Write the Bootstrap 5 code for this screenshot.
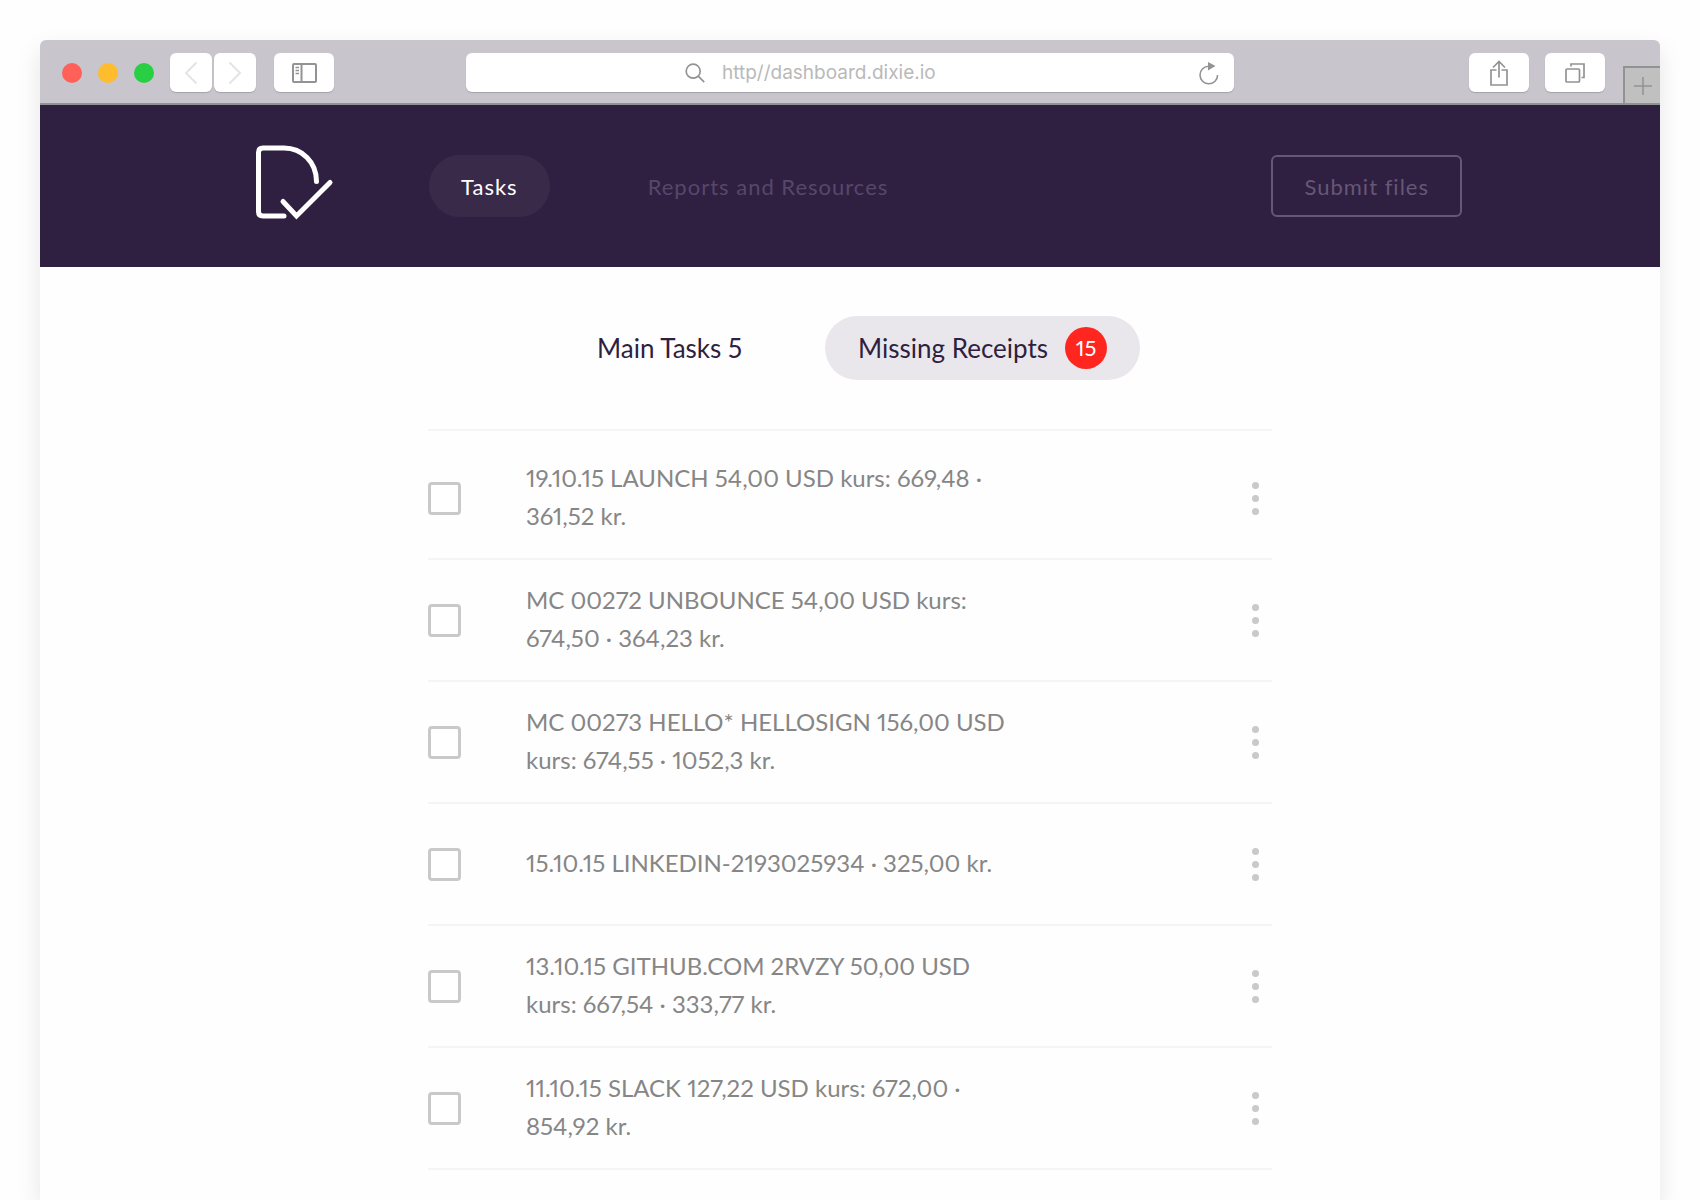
<!DOCTYPE html>
<html lang="en">
<head>
<meta charset="utf-8">
<meta name="viewport" content="width=device-width, initial-scale=1">
<title>Dixie dashboard</title>
<link href="https://cdn.jsdelivr.net/npm/bootstrap@5.3.0/dist/css/bootstrap.min.css" rel="stylesheet">
<style>
  body { background: #fefefe; font-family: Lato, "Open Sans", sans-serif; font-variant-numeric: proportional-nums; }
  .page-wrap { padding: 40px 40px 0; min-height: 100vh; }
  .browser { background: #fefefe; border-radius: 6px 6px 0 0; box-shadow: 0 10px 24px rgba(0, 0, 0, .1); }

  /* browser chrome */
  .toolbar { height: 65px; padding-top: 2px; background: #c8c5cc; border-bottom: 2px solid #929292; border-radius: 6px 6px 0 0; overflow: hidden; }
  .toolbar-side { flex: 1 1 0; }
  .dots { gap: 16px; margin: 0 16px 0 22px; }
  .dot { width: 20px; height: 20px; border-radius: 50%; }
  .dot-red { background: #ff6159; }
  .dot-yellow { background: #ffbd2e; }
  .dot-green { background: #28cf42; }
  .tool-btn { width: 60px; height: 39px; padding: 0; border: 0; border-radius: 6px; background: #fff; color: #939393; box-shadow: 0 1px 1px rgba(0, 0, 0, .18); }
  .tool-btn.half { width: 42px; color: #e4e4e4; }
  .history { gap: 2px; margin-right: 18px; }
  .address { flex: 0 1 768px; height: 39px; padding: 0 15px 0 219px; border-radius: 6px; background: #fff; color: #939393; box-shadow: 0 1px 1px rgba(0, 0, 0, .18); }
  .address-field { margin-left: 17px; font-family: Inter, Roboto, sans-serif; font-size: 19px; color: #b9b9b9; border: 0; padding: 2px 0 0; background: none; min-width: 0; }
  .icon-btn { border: 0; background: none; padding: 0; color: inherit; }
  .new-tab { width: 37px; height: 37px; margin-left: 18px; padding: 0; border: solid #929292; border-width: 2px 0 0 2px; background: #c0c0c0; color: #929292; }

  /* site header */
  .site-header { background: #2f1f41; min-height: 162px; padding: 0 198px 0 216px; }
  .site-nav { margin-left: 95px; gap: 66px; }
  .nav-pill { font-size: 22px; line-height: 30px; letter-spacing: 1px; padding: 17px 32px 15px; border-radius: 32px; color: #57476a; text-decoration: none; }
  .nav-pill.active { background: #3a2a4a; color: #fff; }
  .submit-btn { font-size: 22px; line-height: 30px; letter-spacing: 1px; padding: 15px 31px 13px; border: 2px solid #665776; border-radius: 6px; background: none; color: #665776; }

  /* task list */
  .tasks { width: 844px; max-width: 100%; margin: 0 auto; padding-top: 49px; }
  .task-tabs { gap: 50px; margin-left: 4px; }
  .tab-link { font-size: 26px; line-height: 42px; color: #2f1f41; text-decoration: none; padding: 11px 33px; border-radius: 32px; }
  .tab-link.active { background: #e9e7ec; }
  .count { width: 42px; height: 42px; margin-left: 17px; border-radius: 50%; background: #ff2620; color: #fff; font-size: 22px; text-align: center; }
  .task-list { margin-top: 49px; border-top: 2px solid #f4f4f4; padding-top: 7px; }
  .task { min-height: 122px; border-bottom: 2px solid #f4f4f4; }
  .task-check { appearance: none; flex: none; width: 33px; height: 33px; margin: 0; border: 3px solid #c9c9c9; border-radius: 4px; background: #fff; }
  .task-check:checked { background: #c9c9c9; }
  .task-text { width: 490px; padding-bottom: 2px; margin-left: 65px; font-size: 24px; line-height: 38px; color: #868686; }
  .task-more { border: 0; background: none; padding: 0 13px; color: #c9c9c9; }
</style>
</head>
<body>
<div class="page-wrap d-flex flex-column">
  <div class="browser flex-grow-1">
    <div class="toolbar d-flex align-items-center">
      <div class="toolbar-side d-flex align-items-center">
        <div class="dots d-flex">
          <span class="dot dot-red"></span><span class="dot dot-yellow"></span><span class="dot dot-green"></span>
        </div>
        <div class="history d-flex">
          <button type="button" class="tool-btn half d-flex align-items-center justify-content-center" aria-label="Back">
            <svg width="14" height="24" viewBox="0 0 14 24" fill="none" stroke="currentColor" stroke-width="2"><path d="M12.500 1.500 2 12l10.500 10.500"/></svg>
          </button>
          <button type="button" class="tool-btn half d-flex align-items-center justify-content-center" aria-label="Forward">
            <svg width="14" height="24" viewBox="0 0 14 24" fill="none" stroke="currentColor" stroke-width="2"><path d="M1.500 1.500 12 12 1.500 22.500"/></svg>
          </button>
        </div>
        <button type="button" class="tool-btn d-flex align-items-center justify-content-center" aria-label="Sidebar">
          <svg width="25" height="20" viewBox="0 0 25 20" fill="none" stroke="currentColor" stroke-width="2"><rect x="1" y="1" width="23" height="18" rx="1"/><path d="M9.500 1v18"/><path d="M3.500 4.500h3.500M3.500 7.500h3.500M3.500 10.500h3.500" stroke-width="1.300"/></svg>
        </button>
      </div>
      <div class="address d-flex align-items-center">
        <svg width="20" height="20" viewBox="0 0 20 20" fill="none" stroke="currentColor" stroke-width="1.700"><circle cx="8.200" cy="8.200" r="7"/><path d="m13.200 13.200 6 6"/></svg>
        <input class="address-field flex-grow-1" type="text" value="http//dashboard.dixie.io" aria-label="Address">
        <button type="button" class="icon-btn d-flex" aria-label="Reload">
          <svg width="20" height="24" viewBox="0 0 20 24" fill="none" stroke="currentColor" stroke-width="1.600"><path d="M18.600 14a8.800 8.800 0 1 1-8.800-8.800"/><path d="M9 1v8.500L16.500 5z" fill="currentColor" stroke="none"/></svg>
        </button>
      </div>
      <div class="toolbar-side d-flex align-items-center align-self-stretch justify-content-end">
        <button type="button" class="tool-btn d-flex align-items-center justify-content-center" aria-label="Share">
          <svg width="18" height="26" viewBox="0 0 18 26" fill="none" stroke="currentColor" stroke-width="1.700"><path d="M6.500 10H1v15h16V10h-5.500"/><path d="M9 17.500V1.500M3 7.500l6-6 6 6"/></svg>
        </button>
        <button type="button" class="tool-btn d-flex align-items-center justify-content-center ms-3" aria-label="Show tabs">
          <svg width="20" height="20" viewBox="0 0 20 20" fill="none" stroke="currentColor" stroke-width="1.700"><rect x="1" y="6" width="13.500" height="13" rx="1"/><path d="M6 3.500V1h13v13.500h-2.500"/></svg>
        </button>
        <button type="button" class="new-tab d-flex align-items-center justify-content-center align-self-end" aria-label="New tab">
          <svg width="18" height="18" viewBox="0 0 18 18" stroke="currentColor" stroke-width="1.500"><path d="M9 0v18M0 9h18"/></svg>
        </button>
      </div>
    </div>

    <header class="site-header d-flex align-items-center">
      <a href="#" class="d-flex" aria-label="Dixie home">
        <svg width="78" height="82" viewBox="0 0 78 82" fill="none" stroke="#fff" stroke-width="5" stroke-linecap="round" stroke-linejoin="round"><path d="M28 71H7q-4.500 0-4.500-4.500V7.500Q2.500 3 7 3h21C46 3 60.500 17 60.500 36.500"/><path d="M27 56.500 40.500 71 74 37.500" stroke-linejoin="miter"/></svg>
      </a>
      <nav class="site-nav d-flex align-items-center">
        <a href="#" class="nav-pill active" aria-current="page">Tasks</a>
        <a href="#" class="nav-pill">Reports and Resources</a>
      </nav>
      <button type="button" class="submit-btn ms-auto">Submit files</button>
    </header>

    <main class="tasks">
      <nav class="task-tabs d-flex justify-content-center">
        <a href="#" class="tab-link">Main Tasks 5</a>
        <a href="#" class="tab-link active d-flex align-items-center" aria-current="page">Missing Receipts <span class="count">15</span></a>
      </nav>
      <ul class="task-list list-unstyled mb-0">
        <li class="task d-flex align-items-center">
          <input class="task-check" type="checkbox" id="task-1">
          <label class="task-text" for="task-1">19.10.15 LAUNCH 54,00 USD kurs: 669,48 ·<br>361,52 kr.</label>
          <button type="button" class="task-more d-flex ms-auto" aria-label="More"><svg width="7" height="33" viewBox="0 0 7 33" fill="currentColor"><circle cx="3.500" cy="3.500" r="3.500"/><circle cx="3.500" cy="16.500" r="3.500"/><circle cx="3.500" cy="29.500" r="3.500"/></svg></button>
        </li>
        <li class="task d-flex align-items-center">
          <input class="task-check" type="checkbox" id="task-2">
          <label class="task-text" for="task-2">MC 00272 UNBOUNCE 54,00 USD kurs:<br>674,50 · 364,23 kr.</label>
          <button type="button" class="task-more d-flex ms-auto" aria-label="More"><svg width="7" height="33" viewBox="0 0 7 33" fill="currentColor"><circle cx="3.500" cy="3.500" r="3.500"/><circle cx="3.500" cy="16.500" r="3.500"/><circle cx="3.500" cy="29.500" r="3.500"/></svg></button>
        </li>
        <li class="task d-flex align-items-center">
          <input class="task-check" type="checkbox" id="task-3">
          <label class="task-text" for="task-3">MC 00273 HELLO* HELLOSIGN 156,00 USD<br>kurs: 674,55 · 1052,3 kr.</label>
          <button type="button" class="task-more d-flex ms-auto" aria-label="More"><svg width="7" height="33" viewBox="0 0 7 33" fill="currentColor"><circle cx="3.500" cy="3.500" r="3.500"/><circle cx="3.500" cy="16.500" r="3.500"/><circle cx="3.500" cy="29.500" r="3.500"/></svg></button>
        </li>
        <li class="task d-flex align-items-center">
          <input class="task-check" type="checkbox" id="task-4">
          <label class="task-text" for="task-4">15.10.15 LINKEDIN-2193025934 · 325,00 kr.</label>
          <button type="button" class="task-more d-flex ms-auto" aria-label="More"><svg width="7" height="33" viewBox="0 0 7 33" fill="currentColor"><circle cx="3.500" cy="3.500" r="3.500"/><circle cx="3.500" cy="16.500" r="3.500"/><circle cx="3.500" cy="29.500" r="3.500"/></svg></button>
        </li>
        <li class="task d-flex align-items-center">
          <input class="task-check" type="checkbox" id="task-5">
          <label class="task-text" for="task-5">13.10.15 GITHUB.COM 2RVZY 50,00 USD<br>kurs: 667,54 · 333,77 kr.</label>
          <button type="button" class="task-more d-flex ms-auto" aria-label="More"><svg width="7" height="33" viewBox="0 0 7 33" fill="currentColor"><circle cx="3.500" cy="3.500" r="3.500"/><circle cx="3.500" cy="16.500" r="3.500"/><circle cx="3.500" cy="29.500" r="3.500"/></svg></button>
        </li>
        <li class="task d-flex align-items-center">
          <input class="task-check" type="checkbox" id="task-6">
          <label class="task-text" for="task-6">11.10.15 SLACK 127,22 USD kurs: 672,00 ·<br>854,92 kr.</label>
          <button type="button" class="task-more d-flex ms-auto" aria-label="More"><svg width="7" height="33" viewBox="0 0 7 33" fill="currentColor"><circle cx="3.500" cy="3.500" r="3.500"/><circle cx="3.500" cy="16.500" r="3.500"/><circle cx="3.500" cy="29.500" r="3.500"/></svg></button>
        </li>
      </ul>
    </main>
  </div>
</div>
<script src="https://cdn.jsdelivr.net/npm/bootstrap@5.3.0/dist/js/bootstrap.bundle.min.js"></script>
</body>
</html>
